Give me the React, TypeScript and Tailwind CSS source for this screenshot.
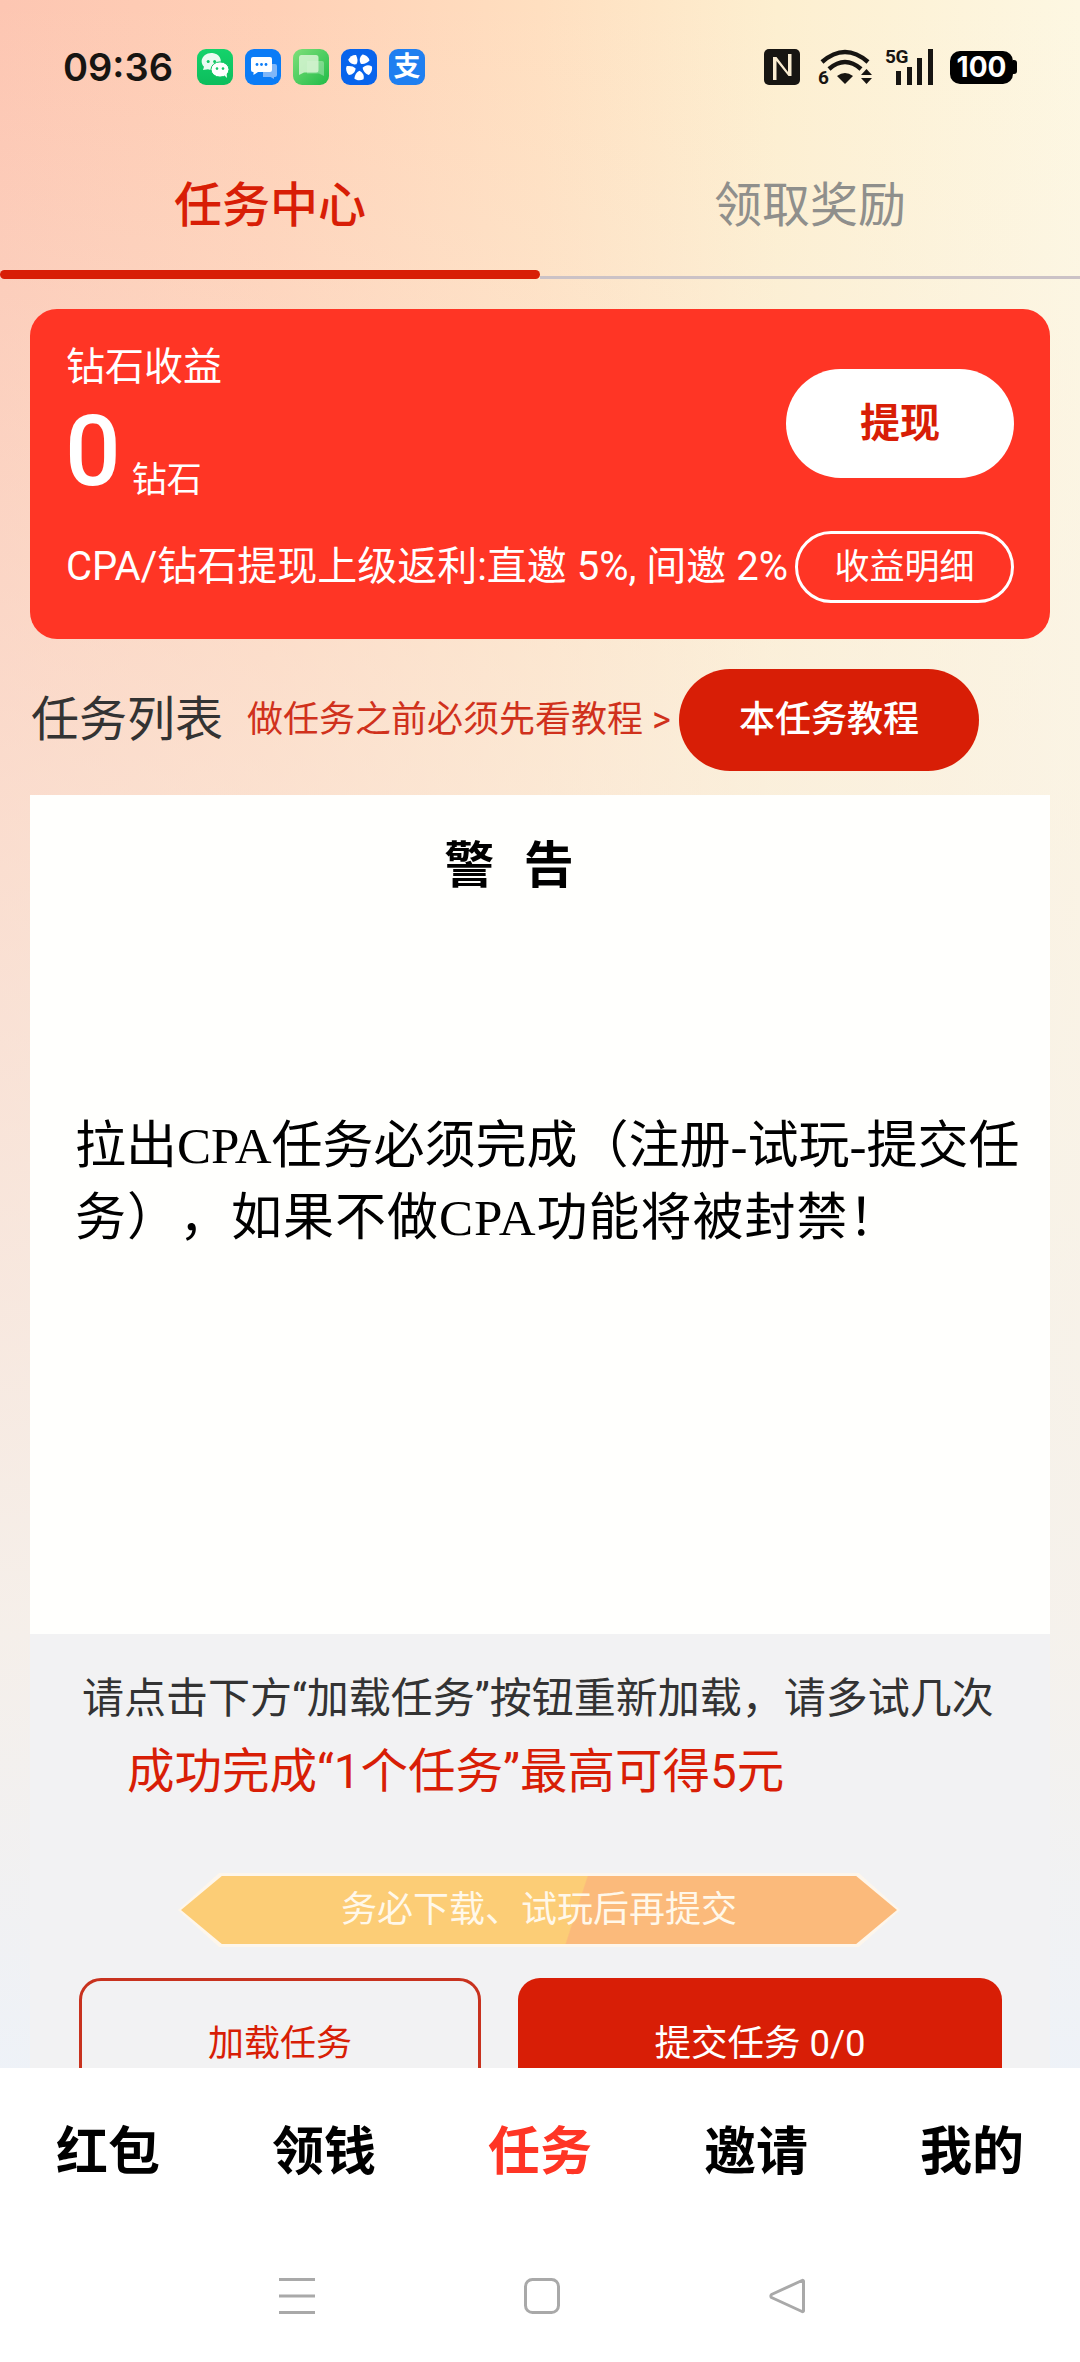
import React from 'react';

function WeChatIcon() {
  return (
    <svg viewBox="0 0 36 36" className="w-[36px] h-[36px]">
      <defs>
        <linearGradient id="wx" x1="0" y1="0" x2="0" y2="1">
          <stop offset="0" stopColor="#14d36b" />
          <stop offset="1" stopColor="#0dbd5c" />
        </linearGradient>
      </defs>
      <rect width="36" height="36" rx="9" fill="url(#wx)" />
      <path d="M6 21l1-3.2a9.6 8.4 0 1 1 4 2.4z" fill="#eafbf1" />
      <circle cx="11.2" cy="12.6" r="1.5" fill="#14c866" />
      <circle cx="17.6" cy="12.6" r="1.5" fill="#14c866" />
      <ellipse cx="23" cy="20.5" rx="9" ry="7.6" fill="#ffffff" stroke="#12c765" strokeWidth="1" />
      <path d="M27 26l3 3-.4-4.6z" fill="#ffffff" />
      <circle cx="20" cy="19.6" r="1.3" fill="#14c866" />
      <circle cx="26" cy="19.6" r="1.3" fill="#14c866" />
    </svg>
  );
}

function BlueMessageIcon() {
  return (
    <svg viewBox="0 0 36 36" className="w-[36px] h-[36px]">
      <rect width="36" height="36" rx="9" fill="#0b7cf6" />
      <path d="M18 15h12a2 2 0 0 1 2 2v9a2 2 0 0 1-2 2h-1v2l-3.500-2H18z" fill="#7fb6f8" />
      <path d="M8 8h17a2 2 0 0 1 2 2v11a2 2 0 0 1-2 2H13l-4.500 3v-3H8a2 2 0 0 1-2-2V10a2 2 0 0 1 2-2z" fill="#ffffff" />
      <circle cx="12" cy="15.500" r="1.400" fill="#0b7cf6" />
      <circle cx="16.500" cy="15.500" r="1.400" fill="#0b7cf6" />
      <circle cx="21" cy="15.500" r="1.400" fill="#0b7cf6" />
    </svg>
  );
}

function GreenMessageIcon() {
  return (
    <svg viewBox="0 0 36 36" className="w-[36px] h-[36px]">
      <defs>
        <linearGradient id="gm" x1="0" y1="0" x2="1" y2="1">
          <stop offset="0" stopColor="#7fe07a" />
          <stop offset="1" stopColor="#20bb48" />
        </linearGradient>
      </defs>
      <rect width="36" height="36" rx="9" fill="url(#gm)" />
      <path d="M14 12h15a2 2 0 0 1 2 2v13l-5-2.400H14z" fill="#ffffff" opacity="0.3" />
      <path d="M8 6h15a2.500 2.500 0 0 1 2.500 2.500V21a2.500 2.500 0 0 1-2.500 2.500H11L6 26V8.500A2.500 2.500 0 0 1 8 6z" fill="#d8f5d4" opacity="0.85" />
    </svg>
  );
}

function PinwheelIcon() {
  return (
    <svg viewBox="0 0 36 36" className="w-[36px] h-[36px]">
      <rect width="36" height="36" rx="9" fill="#0864ec" />
      {[0, 72, 144, 216, 288].map((a) => (
        <path
          key={a}
          d="M19.800 14.800C18 11.500 18.500 8 21.500 5.500C25 6 28 8.500 28.500 11.500C26 14 23 15.500 19.800 14.800z"
          fill="#ffffff"
          transform={`rotate(${a} 18 18)`}
        />
      ))}
    </svg>
  );
}

function WifiIcon() {
  return (
    <svg viewBox="0 0 54 36" className="w-[54px] h-[36px] overflow-visible" fill="#171512">
      <path d="M4 13Q27 -7 50 13" fill="none" stroke="#171512" strokeWidth="4.500" />
      <path d="M11 20Q27 6 43 20" fill="none" stroke="#171512" strokeWidth="4.500" />
      <path d="M19 27Q27 21 35 27L27 35z" />
      <text x="0" y="35" fontSize="19" fontWeight="700" fontFamily="Roboto, sans-serif">6</text>
      <path d="M43 26L48.500 20L54 26z" />
      <path d="M43 29H54L48.500 35z" />
    </svg>
  );
}

function SignalIcon() {
  return (
    <svg viewBox="0 0 48 36" className="w-[48px] h-[36px] overflow-visible" fill="#171512">
      <text x="0" y="14" fontSize="19" fontWeight="700" fontFamily="Roboto, sans-serif" letterSpacing="-0.5">5G</text>
      <rect x="11" y="22" width="5" height="14" />
      <rect x="22" y="18" width="5" height="18" />
      <rect x="32" y="9" width="5" height="27" />
      <rect x="43" y="0" width="5" height="36" />
    </svg>
  );
}

function NfcIcon() {
  return (
    <svg viewBox="0 0 36 36" className="w-[36px] h-[36px]">
      <rect width="36" height="36" rx="5" fill="#171512" />
      <path d="M9 8h3.500L24 23V5h3.500v22h-3L12.500 12v19H9z" fill="#f9ecd0" />
    </svg>
  );
}

function StatusBar() {
  return (
    <div className="flex items-center h-[36px] mt-[49px] shrink-0 pl-[63px] pr-[63px]">
      <span className="font-['Inter',sans-serif] text-[38px] font-semibold leading-[36px] text-[#171512] w-[134px]">09:36</span>
      <div className="flex items-center gap-[12px]">
        <WeChatIcon />
        <BlueMessageIcon />
        <GreenMessageIcon />
        <PinwheelIcon />
        <div className="flex items-center justify-center w-[36px] h-[36px] rounded-[9px] bg-[#1f7ff0] text-white text-[27px] font-bold leading-none">支</div>
      </div>
      <div className="flex items-center ml-auto">
        <NfcIcon />
        <div className="ml-[18px]"><WifiIcon /></div>
        <div className="ml-[13px]"><SignalIcon /></div>
        <div className="flex items-center ml-[17px]">
          <div className="flex items-center justify-center w-[63px] h-[33px] rounded-[10px] bg-black text-white font-['Inter',sans-serif] text-[28px] font-bold leading-none">100</div>
          <div className="w-[4px] h-[14px] rounded-r-[3px] bg-black" />
        </div>
      </div>
    </div>
  );
}

function Tabs() {
  return (
    <div className="flex items-end mt-[91px] shrink-0">
      <div className="flex-1">
        <div className="h-[60px] leading-[60px] text-center text-[48px] font-medium text-[#d81e06]">任务中心</div>
        <div className="mt-[34px] h-[9px] rounded-full bg-[#d81e06]" />
      </div>
      <div className="flex-1">
        <div className="h-[60px] leading-[60px] text-center text-[48px] text-[#8f8f8c]">领取奖励</div>
        <div className="mt-[40px] h-[3px] bg-[#cbc2c6]" />
      </div>
    </div>
  );
}

function EarningsCard() {
  return (
    <div className="h-[330px] shrink-0 rounded-[27px] bg-[#ff3525] pt-[36px] px-[36px] text-white">
      <div className="flex justify-between items-start h-[153px]">
        <div>
          <div className="text-[39px] leading-[44px]">钻石收益</div>
          <div className="flex items-end mt-[15px]">
            <span className="text-[98px] font-medium leading-[96px] ml-[-1px]">0</span>
            <span className="text-[35px] leading-[44px] ml-[11px] mb-[-3px]">钻石</span>
          </div>
        </div>
        <button className="mt-[24px] w-[228px] h-[109px] rounded-full bg-white text-[#d81e06] text-[40px] font-bold">提现</button>
      </div>
      <div className="flex justify-between items-center mt-[33px]">
        <span className="text-[40px] leading-[72px] whitespace-nowrap">CPA/钻石提现上级返利:直邀 5%, 间邀 2%</span>
        <button className="w-[219px] h-[72px] shrink-0 rounded-full border-[3px] border-white text-[35px] leading-none">收益明细</button>
      </div>
    </div>
  );
}

function ListHeader() {
  return (
    <div className="flex items-center h-[102px] mt-[30px] shrink-0">
      <span className="text-[48px] text-[#333333] w-[216px] ml-[1px] whitespace-nowrap">任务列表</span>
      <span className="text-[36px] text-[#d0311c] whitespace-nowrap">做任务之前必须先看教程 &gt;</span>
      <button className="ml-auto mr-[71px] w-[300px] h-[102px] rounded-full bg-[#d81e06] text-white text-[36px] font-medium">本任务教程</button>
    </div>
  );
}

function WarningPanel() {
  return (
    <div className="h-[839px] shrink-0 mt-[24px] bg-[#fffffd] font-['Liberation_Serif','Noto_Sans_CJK_SC',serif] text-black">
      <div className="pt-[41px] pr-[62px] text-center text-[50px] font-bold leading-[60px] [word-spacing:17px]">警 告</div>
      <div className="mt-[214px] pl-[45px] text-[51px] leading-[72px] whitespace-nowrap [text-spacing-trim:space-all]">
        <div>拉出CPA任务必须完成（注册-试玩-提交任</div>
        <div className="tracking-[1px]">务），如果不做CPA功能将被封禁！</div>
      </div>
    </div>
  );
}

function ActionSection() {
  return (
    <div className="flex-1 bg-[#f2f2f3] pt-[35px]">
      <div className="pl-[52px] text-[42px] leading-[60px] text-[#333333] whitespace-nowrap">请点击下方“加载任务”按钮重新加载，请多试几次</div>
      <div className="mt-[11px] pl-[97px] text-[47.500px] leading-[64px] text-[#d81e06] whitespace-nowrap">成功完成“1个任务”最高可得5元</div>
      <div className="mt-[69px] ml-[148px] w-[722px] h-[74px] bg-[#fdf6ec] [clip-path:polygon(0_50%,5.700%_0,94.300%_0,100%_50%,94.300%_100%,5.700%_100%)] p-[3px]">
        <div className="flex items-center justify-center h-full bg-[linear-gradient(108deg,#fccd76_0%,#fccd76_55%,#fbba7b_55.200%,#fbba7b_100%)] [clip-path:polygon(0_50%,5.700%_0,94.300%_0,100%_50%,94.300%_100%,5.700%_100%)] text-[36px] text-[#fff8ea]">
          务必下载、试玩后再提交
        </div>
      </div>
      <div className="flex gap-[37px] mt-[31px] ml-[49px]">
        <button className="w-[402px] h-[132px] shrink-0 rounded-[22px] border-[3px] border-[#c8321e] text-[36px] text-[#d81e06]">加载任务</button>
        <button className="w-[484px] h-[132px] shrink-0 rounded-[22px] bg-[#d81e06] text-[36.500px] text-white">提交任务 0/0</button>
      </div>
    </div>
  );
}

function BottomNav() {
  const items = ['红包', '领钱', '任务', '邀请', '我的'];
  return (
    <div className="h-[294px] shrink-0 bg-white">
      <div className="grid grid-cols-5 h-[170px] items-center text-center text-[52px] font-bold">
        {items.map((t) => (
          <span key={t} className={t === '任务' ? 'text-[#ff3525]' : 'text-black'}>{t}</span>
        ))}
      </div>
      <div className="flex mt-[40px] pl-[279px] gap-[209px]">
        <svg viewBox="0 0 36 36" className="w-[36px] h-[36px]" fill="#a9a9a9">
          <rect y="0" width="36" height="3" />
          <rect y="16.500" width="36" height="3" />
          <rect y="33" width="36" height="3" />
        </svg>
        <svg viewBox="0 0 36 36" className="w-[36px] h-[36px]" fill="none" stroke="#a9a9a9" strokeWidth="3">
          <rect x="1.500" y="1.500" width="33" height="33" rx="7" />
        </svg>
        <svg viewBox="0 0 36 36" className="w-[36px] h-[36px]" fill="none" stroke="#a9a9a9" strokeWidth="3" strokeLinejoin="round">
          <path d="M33 2.500a1 1 0 0 1 1.500 1V32.500a1 1 0 0 1-1.500 1L2.500 19.500a2 2 0 0 1 0-3z" />
        </svg>
      </div>
    </div>
  );
}

export default function App() {
  return (
    <div className="flex flex-col w-[1080px] h-[2362px] overflow-hidden font-['Roboto','Noto_Sans_CJK_SC',sans-serif] bg-[linear-gradient(180deg,rgba(248,240,230,0)_0%,rgba(248,240,230,0.55)_35%,rgba(245,241,236,0.95)_68%,#eef2f8_88%),linear-gradient(90deg,#fdc6b2_0%,#ffd0b6_25%,#ffdfc0_50%,#fdefd0_72%,#fdf7e2_100%)]">
      <StatusBar />
      <Tabs />
      <div className="flex flex-col flex-1 min-h-0 px-[30px] pt-[30px]">
        <EarningsCard />
        <ListHeader />
        <WarningPanel />
        <ActionSection />
      </div>
      <BottomNav />
    </div>
  );
}
